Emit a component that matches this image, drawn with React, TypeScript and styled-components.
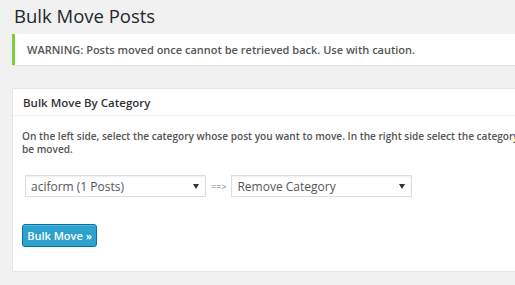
import React from 'react';
import styled, { createGlobalStyle } from 'styled-components';

const GlobalStyle = createGlobalStyle`
    html, body {
        margin: 0;
        padding: 0;
        background: #f1f1f1;
        overflow: hidden;
    }
    body {
        font-family: "Open Sans", "Liberation Sans", sans-serif;
        color: #444;
    }
`;

// the page is wider than the window, the right part is cut off
const Wrap = styled.div`
    padding: 0 0 0 12px;
    width: 740px;
`;

const Title = styled.h1`
    margin: 0;
    padding: 3px 0 0 2px;
    height: 31px;
    box-sizing: border-box;
    font-size: 18.5px;
    font-weight: 400;
    line-height: 26px;
    color: #23282d;
`;

const Notice = styled.div`
    display: flex;
    align-items: center;
    height: 31px;
    margin-top: 3px;
    padding-left: 12px;
    background: #fff;
    border-left: 3px solid #7ad03a;
    box-shadow: 0 1px 1px rgba(0, 0, 0, 0.06);
    font-size: 11px;
    font-weight: 600;
    color: #555;
`;

const Postbox = styled.div`
    margin-top: 23px;
    background: #fff;
    border: 1px solid #e5e5e5;
    box-shadow: 0 1px 1px rgba(0, 0, 0, 0.04);
`;

const BoxHeader = styled.h3`
    margin: 0;
    height: 26px;
    display: flex;
    align-items: center;
    padding-left: 10px;
    border-bottom: 1px solid #eee;
    font-size: 11.5px;
    font-weight: 600;
    color: #333;
`;

const BoxBody = styled.div`
    padding: 14px 9px 24px;
`;

const Text = styled.p`
    margin: 0;
    font-size: 10.1px;
    font-weight: 600;
    line-height: 13px;
    color: #555;
`;

const Row = styled.div`
    display: flex;
    align-items: center;
    gap: 4px;
    margin: 19px 0 0 3px;
`;

const Select = styled.div<{ $width: number }>`
    width: ${p => p.$width}px;
    height: 22px;
    box-sizing: border-box;
    display: flex;
    align-items: center;
    justify-content: space-between;
    padding: 0 6px 0 5px;
    background: #fff;
    border: 1px solid #ddd;
    box-shadow: inset 0 1px 2px rgba(0, 0, 0, 0.07);
    font-size: 12px;
    color: #555;
`;

const Arrow = styled.span`
    width: 0;
    height: 0;
    border-left: 3px solid transparent;
    border-right: 3px solid transparent;
    border-top: 5px solid #333;
`;

const Sep = styled.span`
    font-size: 9px;
    color: #777;
    padding: 0 1px;
`;

const Button = styled.button`
    display: block;
    margin: 27px 0 0;
    width: 75px;
    height: 23px;
    padding: 0;
    background: #2ea2cc;
    border: 1px solid #0074a2;
    border-radius: 3px;
    box-shadow: inset 0 1px 0 rgba(120, 200, 230, 0.5);
    color: #fff;
    font-family: "Open Sans", "Liberation Sans", sans-serif;
    font-size: 11px;
    font-weight: 600;
`;

const App = () => {
    return (
        <>
            <GlobalStyle />
            <Wrap>
                <Title>Bulk Move Posts</Title>
                <Notice>WARNING: Posts moved once cannot be retrieved back. Use with caution.</Notice>
                <Postbox>
                    <BoxHeader>Bulk Move By Category</BoxHeader>
                    <BoxBody>
                        <Text>
                            On the left side, select the category whose post you want to move. In the right side select the category to which you want the posts to
                            <br />
                            be moved.
                        </Text>
                        <Row>
                            <Select $width={181}>
                                <span>aciform (1 Posts)</span>
                                <Arrow />
                            </Select>
                            <Sep>==&gt;</Sep>
                            <Select $width={181}>
                                <span>Remove Category</span>
                                <Arrow />
                            </Select>
                        </Row>
                        <Button>Bulk Move &raquo;</Button>
                    </BoxBody>
                </Postbox>
            </Wrap>
        </>
    );
}

export default App;
